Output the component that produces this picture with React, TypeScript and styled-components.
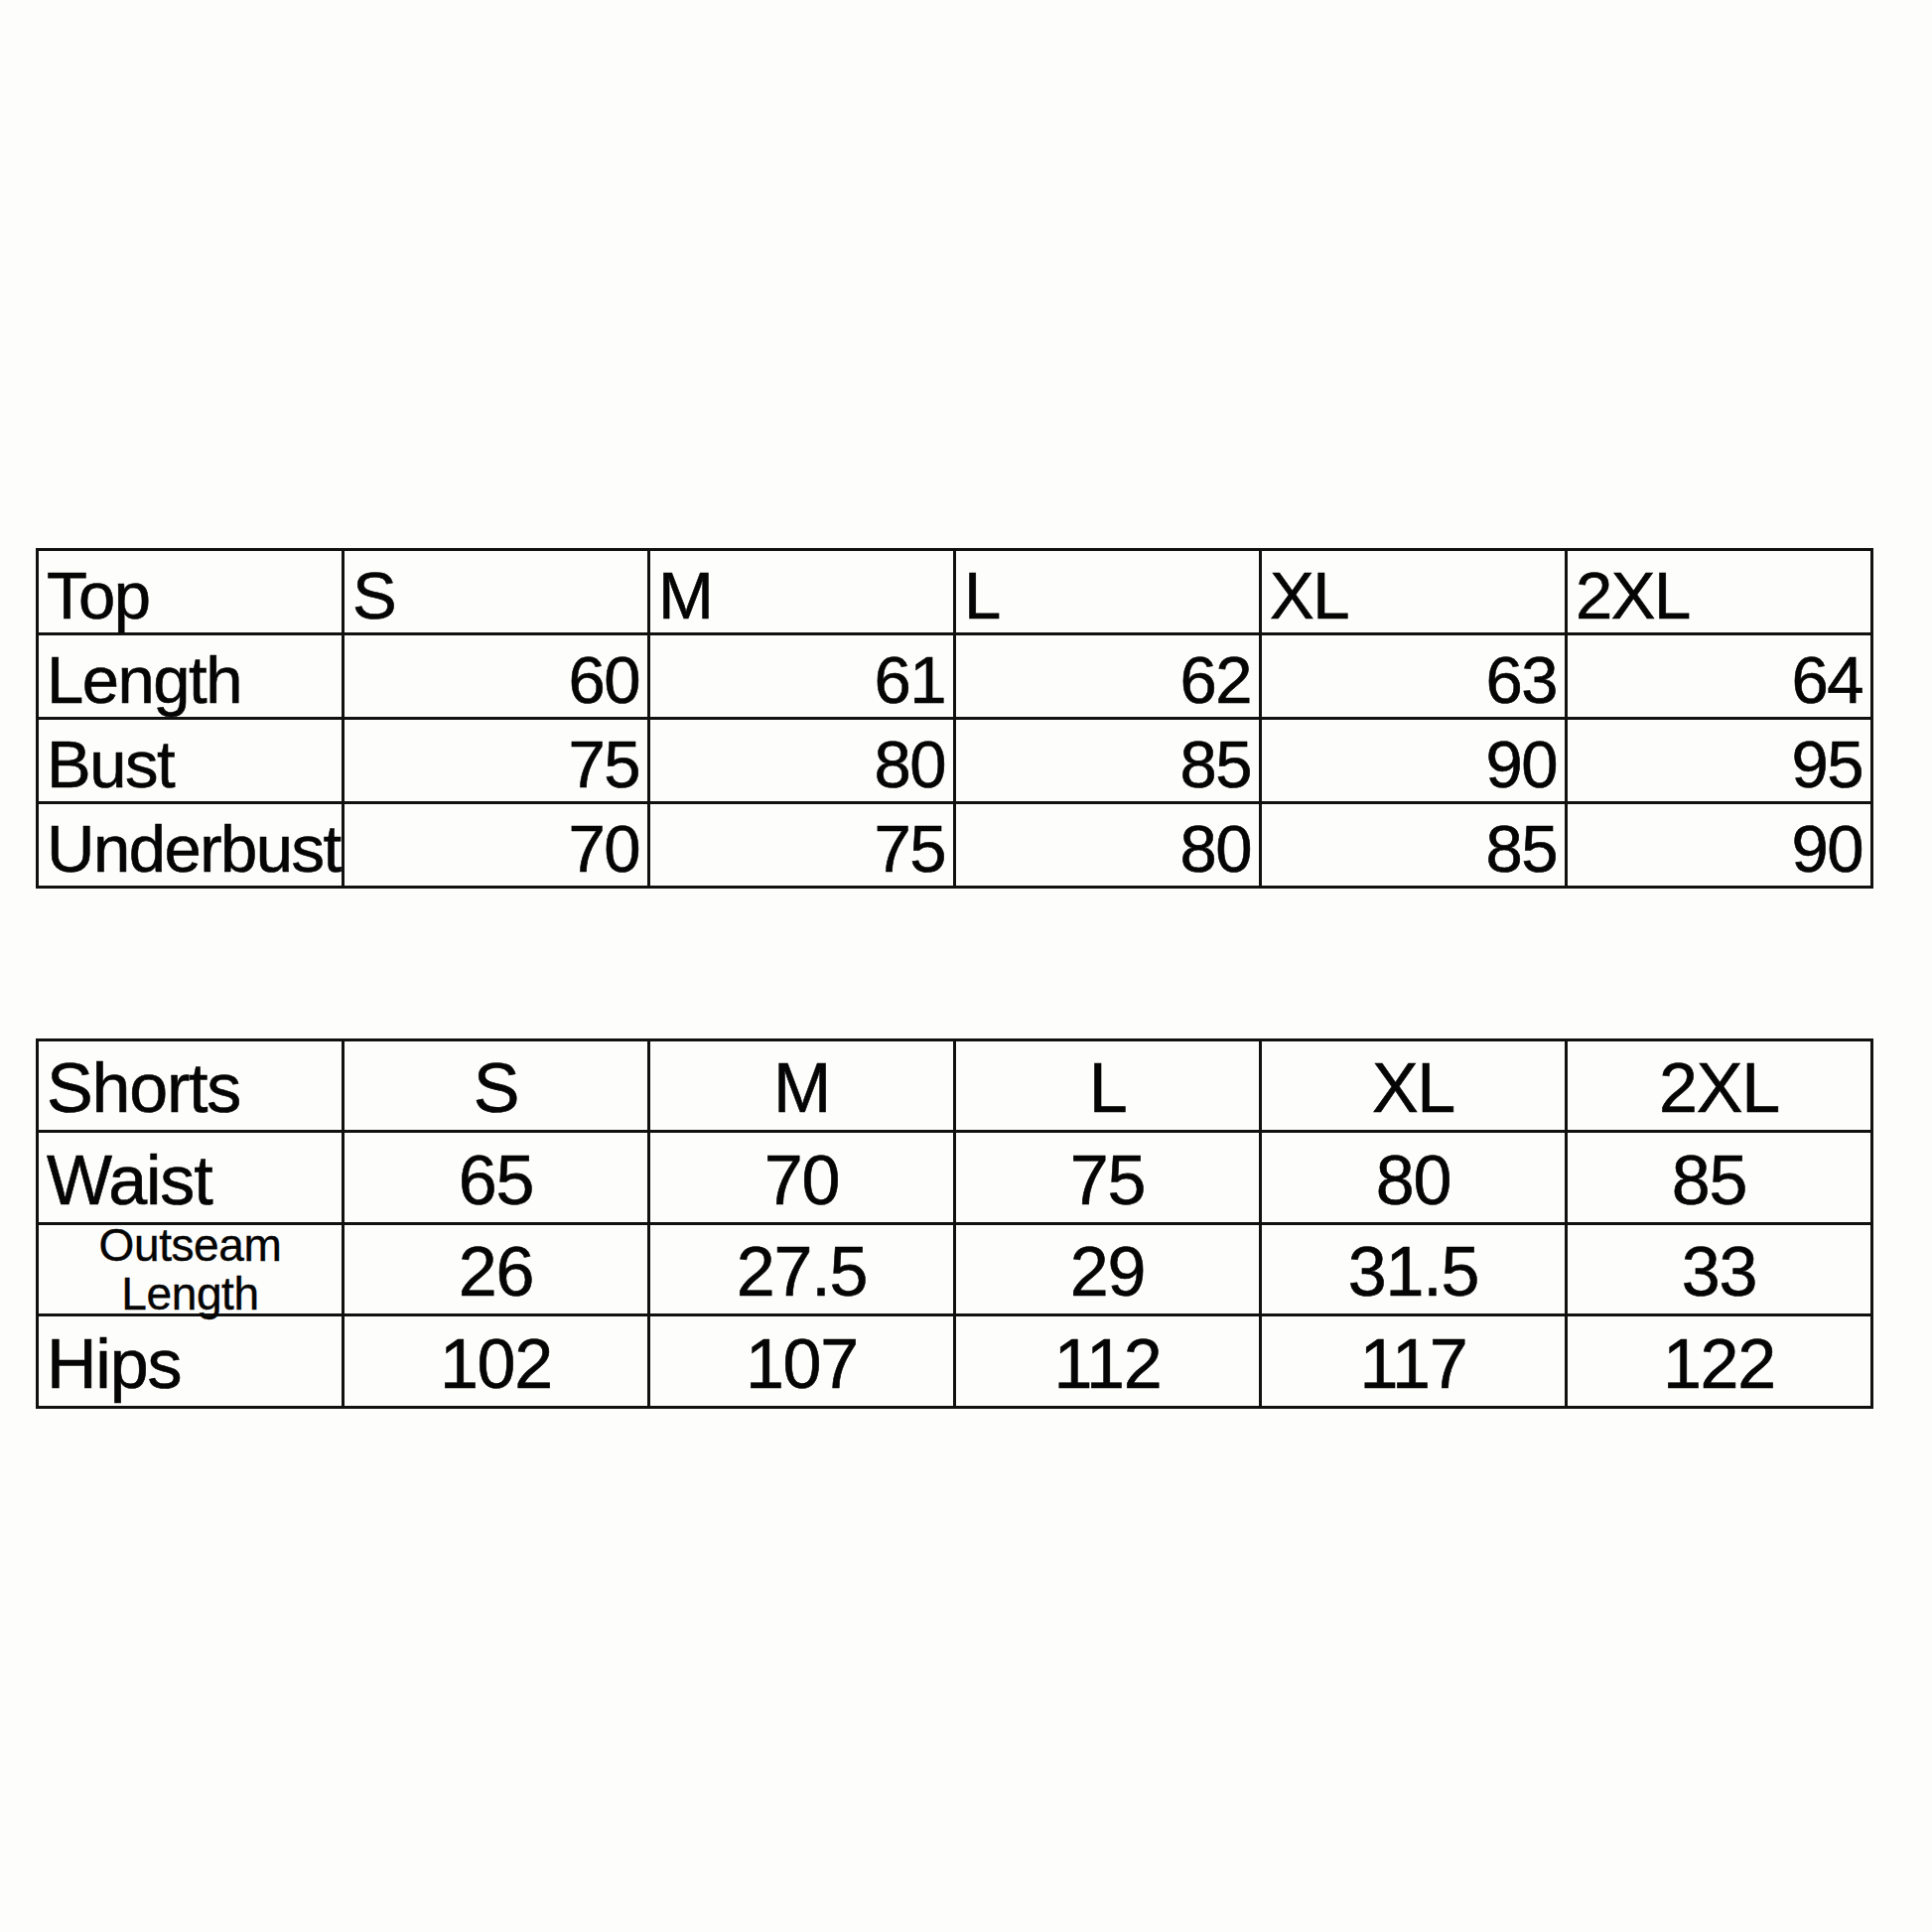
import React from "react";
import styled, { createGlobalStyle } from "styled-components";

const GlobalStyle = createGlobalStyle`
  html, body {
    margin: 0;
    padding: 0;
    background: #fdfdfb;
  }
  body {
    font-family: "Liberation Sans", Arial, sans-serif;
    color: #050505;
  }
`;

type Align = "left" | "right" | "center";

interface CellData {
  text: string;
  align: Align;
  small?: boolean;
  nudge?: number;
}

const topHeader = ["Top", "S", "M", "L", "XL", "2XL"];
const topRows: [string, string[]][] = [
  ["Length", ["60", "61", "62", "63", "64"]],
  ["Bust", ["75", "80", "85", "90", "95"]],
  ["Underbust", ["70", "75", "80", "85", "90"]],
];

const shortsHeader = ["Shorts", "S", "M", "L", "XL", "2XL"];
const shortsRows: [string, string[]][] = [
  ["Waist", ["65", "70", "75", "80", "85"]],
  ["Outseam Length", ["26", "27.5", "29", "31.5", "33"]],
  ["Hips", ["102", "107", "112", "117", "122"]],
];

const Page = styled.div`
  width: 1946px;
  min-height: 1946px;
  box-sizing: border-box;
  padding: 552px 0 0 36px;
  display: flex;
  flex-direction: column;
  gap: 151px;
`;

const SizeGrid = styled.div<{ $rows: string }>`
  display: grid;
  grid-template-columns: repeat(6, 308px);
  grid-template-rows: ${(p) => p.$rows};
  width: max-content;
  border-top: 3px solid #111;
  border-left: 3px solid #111;
`;

const Cell = styled.div<{ $align: Align; $size: number; $pad: number; $track: number }>`
  box-sizing: border-box;
  border-right: 3px solid #111;
  border-bottom: 3px solid #111;
  display: flex;
  align-items: flex-end;
  justify-content: ${(p) =>
    p.$align === "left" ? "flex-start" : p.$align === "right" ? "flex-end" : "center"};
  padding: 0 8px ${(p) => p.$pad}px 8px;
  font-size: ${(p) => p.$size}px;
  line-height: 1;
  letter-spacing: ${(p) => p.$track}px;
  -webkit-text-stroke: 0.6px #050505;
  white-space: nowrap;
  min-width: 0;
`;

const StackCell = styled.div`
  box-sizing: border-box;
  border-right: 3px solid #111;
  border-bottom: 3px solid #111;
  display: flex;
  flex-direction: column;
  align-items: center;
  font-size: 46px;
  line-height: 49px;
  letter-spacing: -0.4px;
  -webkit-text-stroke: 0.4px #050505;
  min-width: 0;
`;

const StackText = styled.span`
  margin-top: -4px;
  text-align: center;
`;

const Nudge = styled.span<{ $by: number }>`
  margin-right: ${(p) => p.$by}px;
`;

const buildTop = (): CellData[] => {
  const cells: CellData[] = topHeader.map((t) => ({ text: t, align: "left" }));
  topRows.forEach(([label, values]) => {
    cells.push({ text: label, align: "left" });
    values.forEach((v) => cells.push({ text: v, align: "right" }));
  });
  return cells;
};

const buildShorts = (): CellData[] => {
  const cells: CellData[] = shortsHeader.map((t, i) => ({
    text: t,
    align: i === 0 ? "left" : "center",
  }));
  shortsRows.forEach(([label, values], r) => {
    const twoLine = label.includes(" ");
    cells.push({ text: label, align: twoLine ? "center" : "left", small: twoLine });
    values.forEach((v, i) =>
      cells.push({ text: v, align: "center", nudge: r === 0 && i === 4 ? 20 : 0 })
    );
  });
  return cells;
};

interface SizeTableProps {
  cells: CellData[];
  rows: string;
  size: number;
  pad: number;
  track: number;
}

const SizeTable: React.FC<SizeTableProps> = ({ cells, rows, size, pad, track }) => (
  <SizeGrid $rows={rows}>
    {cells.map((c, i) =>
      c.small ? (
        <StackCell key={i}>
          <StackText>
            {c.text.split(" ").map((w, j) => (
              <div key={j}>{w}</div>
            ))}
          </StackText>
        </StackCell>
      ) : (
        <Cell key={i} $align={c.align} $size={size} $pad={pad} $track={track}>
          {c.nudge ? <Nudge $by={c.nudge}>{c.text}</Nudge> : c.text}
        </Cell>
      )
    )}
  </SizeGrid>
);

export default function App() {
  return (
    <>
      <GlobalStyle />
      <Page>
        <SizeTable cells={buildTop()} rows="repeat(4, 85px)" size={67} pad={4} track={-1.5} />
        <SizeTable
          cells={buildShorts()}
          rows="92px 93px 92px 93px"
          size={70}
          pad={7}
          track={-1.2}
        />
      </Page>
    </>
  );
}
